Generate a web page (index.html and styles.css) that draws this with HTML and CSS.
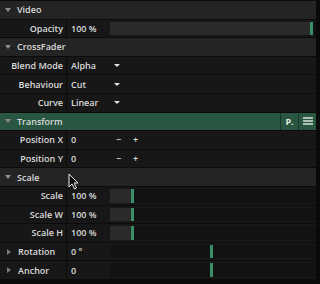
FILE: index.html
```html
<!DOCTYPE html>
<html lang="en">
<head>
  <meta charset="UTF-8">
  <title>Inspector</title>
  <link rel="stylesheet" href="styles.css">
</head>
<body>
  <div class="panel">
    <div class="list">
      <!-- Video -->
      <div class="group"><span class="tri down"></span>Video</div>
      <div class="row">
        <div class="label">Opacity</div>
        <div class="value">
          <span class="val">100 %</span>
          <div class="track"><div class="fill" style="width: 97%"></div><div class="mark" style="left: 97%"></div></div>
        </div>
      </div>

      <!-- CrossFader -->
      <div class="group"><span class="tri down"></span>CrossFader</div>
      <div class="row">
        <div class="label">Blend Mode</div>
        <div class="value"><span class="val">Alpha</span><span class="drop"></span></div>
      </div>
      <div class="row">
        <div class="label">Behaviour</div>
        <div class="value"><span class="val">Cut</span><span class="drop"></span></div>
      </div>
      <div class="row">
        <div class="label">Curve</div>
        <div class="value"><span class="val">Linear</span><span class="drop"></span></div>
      </div>

      <!-- Transform -->
      <div class="group active">
        <span class="tri down"></span>Transform
        <div class="tools">
          <span class="tool">P.</span>
          <span class="tool">
            <svg width="10" height="8" viewBox="0 0 10 8"><path d="M0 1h10M0 4h10M0 7h10" stroke="#d8e4dc" stroke-width="1.4"/></svg>
          </span>
        </div>
      </div>
      <div class="row">
        <div class="label">Position X</div>
        <div class="value"><span class="val">0</span><span class="step">&minus;</span><span class="step">+</span></div>
      </div>
      <div class="row">
        <div class="label">Position Y</div>
        <div class="value"><span class="val">0</span><span class="step">&minus;</span><span class="step">+</span></div>
      </div>

      <!-- Scale -->
      <div class="group"><span class="tri down"></span>Scale</div>
      <div class="row">
        <div class="label">Scale</div>
        <div class="value">
          <span class="val">100 %</span>
          <div class="track"><div class="fill" style="width: 10%"></div><div class="mark" style="left: 10%"></div></div>
        </div>
      </div>
      <div class="row">
        <div class="label">Scale W</div>
        <div class="value">
          <span class="val">100 %</span>
          <div class="track"><div class="fill" style="width: 10%"></div><div class="mark" style="left: 10%"></div></div>
        </div>
      </div>
      <div class="row">
        <div class="label">Scale H</div>
        <div class="value">
          <span class="val">100 %</span>
          <div class="track"><div class="fill" style="width: 10%"></div><div class="mark" style="left: 10%"></div></div>
        </div>
      </div>
      <div class="row">
        <div class="label left"><span class="tri right"></span>Rotation</div>
        <div class="value">
          <span class="val">0 °</span>
          <div class="track"><div class="mark" style="left: 48.5%"></div></div>
        </div>
      </div>
      <div class="row">
        <div class="label left"><span class="tri right"></span>Anchor</div>
        <div class="value">
          <span class="val">0</span>
          <div class="track"><div class="mark" style="left: 48.5%"></div></div>
        </div>
      </div>
    </div>
    <div class="edge"></div>

    <svg class="cursor" width="11" height="17" viewBox="0 0 11 17">
      <path d="M1 1v13l3-3 2.5 5 2-1-2.5-5h4z" fill="#111" stroke="#e8e8e8" stroke-width="1"/>
    </svg>
  </div>
</body>
</html>
```

FILE: styles.css
```css
html, body {
  margin: 0;
  padding: 0;
  background: #0b0b0b;
}
body {
  font-family: "Open Sans", "Liberation Sans", sans-serif;
  font-size: 9px;
  font-weight: 600;
  color: #dadada;
  width: 320px;
  height: 284px;
  overflow: hidden;
}
.panel {
  position: relative;
  display: flex;
  height: 284px;
}
.list {
  flex: 1;
  display: flex;
  flex-direction: column;
  gap: 1px;
  padding-top: 1px;
}
.edge {
  width: 4px;
  background: #0a0a0a;
}
.group {
  height: 17.6px;
  display: flex;
  align-items: center;
  background: #242424;
  padding-left: 5px;
}
.group.active {
  background: #285640;
}
.tri {
  width: 0;
  height: 0;
  margin-right: 6px;
}
.tri.down {
  border-left: 3px solid transparent;
  border-right: 3px solid transparent;
  border-top: 4px solid #8c8c8c;
}
.tri.right {
  border-top: 3px solid transparent;
  border-bottom: 3px solid transparent;
  border-left: 4px solid #7a7a7a;
  margin-left: 1px;
  margin-right: 7px;
}
.tools {
  margin-left: auto;
  display: flex;
  height: 100%;
}
.tool {
  width: 17px;
  display: flex;
  align-items: center;
  justify-content: center;
  border-left: 1px solid #173727;
  color: #e4ece7;
  font-weight: 700;
}
.row {
  height: 17.6px;
  display: flex;
}
.label {
  width: 63px;
  padding-right: 3px;
  display: flex;
  align-items: center;
  justify-content: flex-end;
  background: #171717;
  border-right: 1px solid #0b0b0b;
}
.label.left {
  justify-content: flex-start;
  padding-left: 6px;
  width: 57px;
}
.value {
  flex: 1;
  display: flex;
  align-items: center;
  background: #171717;
  padding-left: 4px;
}
.val {
  width: 39px;
  flex: none;
}
.track {
  position: relative;
  align-self: stretch;
  flex: 1;
  margin: 2px 0;
  background: #121212;
}
.fill {
  height: 100%;
  background: #2a2a2a;
}
.mark {
  position: absolute;
  top: 0;
  bottom: 0;
  width: 3px;
  background: #3a9066;
}
.drop {
  width: 0;
  height: 0;
  margin-left: 4px;
  border-left: 3px solid transparent;
  border-right: 3px solid transparent;
  border-top: 3px solid #e0e0e0;
}
.step {
  width: 17px;
  text-align: center;
  flex: none;
}
.step:first-of-type {
  margin-left: 1px;
}
.cursor {
  position: absolute;
  left: 68px;
  top: 173px;
}
```
